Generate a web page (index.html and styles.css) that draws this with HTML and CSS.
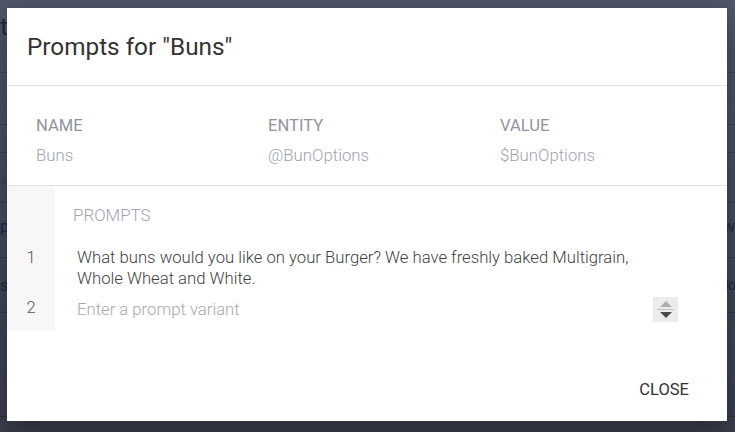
FILE: index.html
```html
<!DOCTYPE html>
<html lang="en">
<head>
<meta charset="utf-8">
<title>Prompts for "Buns"</title>
<link rel="stylesheet" href="styles.css">
</head>
<body>
<div class="page">
  <div class="bg-row bg-r1"><span class="bg-title">t</span></div>
  <div class="bg-row bg-r2"></div>
  <div class="bg-row bg-r3"></div>
  <div class="bg-row bg-r4"><span class="bg-small">AN</span></div>
  <div class="bg-row bg-r5"><span>p</span><span>w</span></div>
  <div class="bg-row bg-r6"><span>s</span><span class="bg-lo">lo</span></div>
  <div class="bg-row bg-r7"></div>
</div>

<div class="dialog" role="dialog">
  <div class="dialog-header">
    <h1 class="dialog-title">Prompts for "Buns"</h1>
  </div>

  <div class="info">
    <div class="info-col">
      <div class="info-label">NAME</div>
      <div class="info-value">Buns</div>
    </div>
    <div class="info-col">
      <div class="info-label">ENTITY</div>
      <div class="info-value">@BunOptions</div>
    </div>
    <div class="info-col">
      <div class="info-label">VALUE</div>
      <div class="info-value">$BunOptions</div>
    </div>
  </div>

  <div class="prompts">
    <div class="gutter gutter-head"></div>
    <div class="prompts-label">PROMPTS</div>

    <div class="gutter num">1</div>
    <div class="prompt-text">What buns would you like on your Burger? We have freshly baked Multigrain,<br>Whole Wheat and White.</div>

    <div class="gutter num last">2</div>
    <div class="prompt-input last">
      <span class="placeholder">Enter a prompt variant</span>
      <span class="spinner"><span class="spin-up"></span><span class="spin-line"></span><span class="spin-down"></span></span>
    </div>
  </div>

  <div class="dialog-footer">
    <button class="btn-close" type="button">CLOSE</button>
  </div>
</div>
</body>
</html>
```

FILE: styles.css
```css
html, body {
  margin: 0;
  padding: 0;
}

body {
  width: 735px;
  height: 432px;
  overflow: hidden;
  position: relative;
  font-family: Roboto, "Liberation Sans", sans-serif;
  background: linear-gradient(#51566a, #474b5d 50%, #3b3e4c);
}

/* underlying page (behind the modal) */
.page {
  display: flex;
  flex-direction: column;
}

.bg-row {
  box-sizing: border-box;
  display: flex;
  align-items: center;
  justify-content: space-between;
  border-bottom: 1px solid rgba(20, 24, 40, 0.28);
  color: #1f2944;
  font-size: 16px;
}

.bg-r1 { height: 73px; align-items: flex-start; padding-top: 12px; }
.bg-r2 { height: 52px; }
.bg-r3 { height: 28px; }
.bg-r4 { height: 50px; padding-top: 8px; }
.bg-r5 { height: 55px; padding-bottom: 8px; }
.bg-r6 { height: 55px; }
.bg-r7 { height: 104px; }

.bg-title {
  font-size: 24px;
  line-height: 30px;
}

.bg-small {
  font-size: 11px;
  color: #39425d;
}

.bg-lo {
  letter-spacing: -1px;
  font-size: 14px;
}

/* modal */
.dialog {
  position: absolute;
  left: 7px;
  top: 8px;
  width: 720px;
  height: 413px;
  background: #fff;
  box-shadow: 0 10px 30px rgba(0, 0, 0, 0.35);
  display: flex;
  flex-direction: column;
}

.dialog-header {
  box-sizing: border-box;
  height: 78px;
  display: flex;
  align-items: center;
  padding-left: 20px;
  border-bottom: 1px solid #e2e2e2;
}

.dialog-title {
  margin: 0;
  font-size: 24.3px;
  font-weight: 400;
  color: #333;
  line-height: 30px;
}

.info {
  display: grid;
  grid-template-columns: repeat(3, 232px);
  padding: 30px 0 20px 29px;
  border-bottom: 1px solid #e2e2e2;
}

.info-label {
  font-size: 16.6px;
  line-height: 20px;
  color: #8f94a0;
  font-weight: 400;
}

.info-value {
  margin-top: 9px;
  font-size: 16.8px;
  line-height: 20px;
  color: #a0a4ae;
  font-weight: 300;
}

.prompts {
  display: grid;
  grid-template-columns: 48px 1fr;
}

.gutter {
  background: #f7f7f7;
}

.prompts-label {
  padding: 19px 0 18px 18px;
  font-size: 16.9px;
  line-height: 20px;
  color: #a0a4ae;
  font-weight: 300;
}

.num {
  padding: 4px 0;
  text-align: center;
  font-size: 16.5px;
  line-height: 21px;
  color: #555;
  font-weight: 300;
}

.prompt-text,
.prompt-input {
  padding: 4px 0 4px 22px;
  font-size: 16.7px;
  line-height: 21px;
  color: #3f3f3f;
  font-weight: 300;
}

.prompt-input {
  display: flex;
  align-items: center;
  padding-right: 49px;
}

.last {
  padding-bottom: 8px;
}

.placeholder {
  flex: 1;
  color: #a9a9a9;
  font-weight: 300;
}

.spinner {
  width: 25px;
  height: 25px;
  background: #ececec;
  display: flex;
  flex-direction: column;
  align-items: center;
  justify-content: center;
}

.spin-up {
  width: 0;
  height: 0;
  border-left: 6px solid transparent;
  border-right: 6px solid transparent;
  border-bottom: 6px solid #aeaeae;
}

.spin-line {
  width: 17px;
  height: 1px;
  background: #bdbdbd;
  margin: 2px 0;
}

.spin-down {
  width: 0;
  height: 0;
  border-left: 6px solid transparent;
  border-right: 6px solid transparent;
  border-top: 6px solid #4a4a4a;
}

.dialog-footer {
  margin-top: auto;
  display: flex;
  justify-content: flex-end;
  padding: 0 38px 21px 0;
}

.btn-close {
  border: 0;
  background: transparent;
  padding: 0;
  font-family: inherit;
  font-size: 16.5px;
  line-height: 20px;
  color: #333;
  font-weight: 400;
  cursor: pointer;
}
```
